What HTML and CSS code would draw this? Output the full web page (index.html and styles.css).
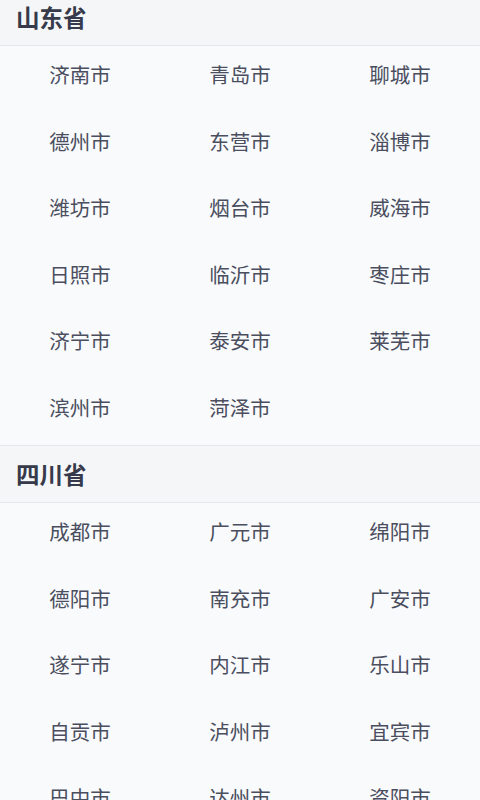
FILE: index.html
```html
<!DOCTYPE html>
<html lang="zh">
<head>
<meta charset="utf-8">
<link rel="stylesheet" href="styles.css">
</head>
<body>
<div class="page">
  <section class="province">
    <h2 class="province-title">山东省</h2>
    <ul class="city-grid">
      <li>济南市</li><li>青岛市</li><li>聊城市</li>
      <li>德州市</li><li>东营市</li><li>淄博市</li>
      <li>潍坊市</li><li>烟台市</li><li>威海市</li>
      <li>日照市</li><li>临沂市</li><li>枣庄市</li>
      <li>济宁市</li><li>泰安市</li><li>莱芜市</li>
      <li>滨州市</li><li>菏泽市</li>
    </ul>
  </section>
  <section class="province">
    <h2 class="province-title">四川省</h2>
    <ul class="city-grid">
      <li>成都市</li><li>广元市</li><li>绵阳市</li>
      <li>德阳市</li><li>南充市</li><li>广安市</li>
      <li>遂宁市</li><li>内江市</li><li>乐山市</li>
      <li>自贡市</li><li>泸州市</li><li>宜宾市</li>
      <li>巴中市</li><li>达州市</li><li>资阳市</li>
    </ul>
  </section>
</div>
</body>
</html>
```
FILE: styles.css
```css
html, body {
  margin: 0;
  padding: 0;
  background: #f9fafc;
  overflow: hidden;
}
body {
  font-family: "Noto Sans CJK SC", "Noto Sans", sans-serif;
}
.page {
  margin-top: -11px;
}
.province {
  border-top: 1px solid #e6e7ea;
}
.province:first-child {
  border-top: none;
}
.province-title {
  margin: 0;
  height: 57px;
  box-sizing: border-box;
  padding-left: 16px;
  display: flex;
  align-items: center;
  font-size: 23.5px;
  font-weight: 700;
  color: #363a4a;
  background: #f5f6f8;
  border-bottom: 1px solid #e6e7ea;
}
.city-grid {
  list-style: none;
  margin: 0;
  padding: 0;
  display: grid;
  grid-template-columns: repeat(3, 1fr);
}
.city-grid li {
  height: 66.5px;
  box-sizing: border-box;
  padding-top: 15px;
  line-height: 26px;
  text-align: center;
  font-size: 20.5px;
  color: #4a4e5e;
}
```
